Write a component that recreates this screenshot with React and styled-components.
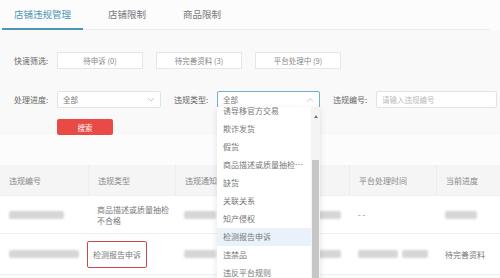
import React from 'react';
import styled, { createGlobalStyle } from 'styled-components';

const GlobalStyle = createGlobalStyle`
  html, body {
    margin: 0;
    padding: 0;
    width: 500px;
    height: 278px;
    overflow: hidden;
    background: #fcfcfc;
    font-family: "Noto Sans CJK SC", "Noto Sans", sans-serif;
    color: #666;
  }
`;

const Page = styled.div`
  width: 500px;
  height: 278px;
  overflow: hidden;
`;

// Tabs
const Tabs = styled.div`
  display: flex;
  gap: 13px;
  height: 29px;
  margin: 0 10px 0 2px;
  border-bottom: 1px solid #ececec;
`;

const Tab = styled.div`
  padding: 0 12px;
  font-size: 9.5px;
  line-height: 29px;
  color: ${(p) => (p.$active ? '#4d97b5' : '#777')};
  border-bottom: 2px solid ${(p) => (p.$active ? '#4d97b5' : 'transparent')};
  margin-bottom: -1px;
`;

// Filters
const Filters = styled.div`
  padding: 22px 0 0 14px;
  background: #f9f9f9;
`;

const Row = styled.div`
  display: flex;
  align-items: center;
  height: 17px;
  margin-bottom: ${(p) => p.$mb || 0}px;
`;

const Label = styled.div`
  width: 43px;
  flex: none;
  font-size: 8px;
  color: #666;
`;

const QuickBtn = styled.div`
  width: 86px;
  height: 17px;
  margin-right: 13px;
  box-sizing: border-box;
  border: 1px solid #e6e6e6;
  background: #fff;
  font-size: 7.5px;
  color: #888;
  display: flex;
  align-items: center;
  justify-content: center;
`;

const FieldWrap = styled.div`
  position: relative;
  width: ${(p) => p.$w}px;
  margin-right: 13px;
  flex: none;
`;

const Field = styled.div`
  height: 17px;
  box-sizing: border-box;
  border: 1px solid ${(p) => (p.$focus ? '#6fb0cc' : '#e3e3e3')};
  border-radius: 2px;
  background: #fff;
  display: flex;
  align-items: center;
  justify-content: space-between;
  padding: 0 5px;
  font-size: 7.5px;
  color: ${(p) => (p.$placeholder ? '#bbb' : '#777')};
`;

const SearchBtn = styled.div`
  margin-left: 43px;
  width: 56px;
  height: 16px;
  border-radius: 2px;
  background: #ea4a45;
  color: #fff;
  font-size: 7.5px;
  display: flex;
  align-items: center;
  justify-content: center;
`;

// Dropdown
const Menu = styled.div`
  position: absolute;
  top: 16px;
  left: 0;
  width: 103px;
  height: 180px;
  background: #fff;
  box-shadow: 0 2px 6px rgba(0, 0, 0, 0.12);
  display: flex;
  overflow: hidden;
  z-index: 5;
`;

const MenuList = styled.div`
  flex: 1;
  min-width: 0;
  margin-top: -5px;
`;

const MenuItem = styled.div`
  height: 18px;
  line-height: 18px;
  padding: 0 4px 0 6px;
  font-size: 8px;
  color: #777;
  white-space: nowrap;
  overflow: hidden;
  text-overflow: ellipsis;
  background: ${(p) => (p.$hover ? '#e9f2fb' : 'transparent')};
`;

const ScrollTrack = styled.div`
  width: 9px;
  flex: none;
  background: #f4f4f4;
  display: flex;
  flex-direction: column;
  align-items: center;
`;

const ScrollArrow = styled.div`
  margin-top: 8px;
  width: 0;
  height: 0;
  border-left: 2.5px solid transparent;
  border-right: 2.5px solid transparent;
  border-bottom: 3px solid #777;
`;

const ScrollThumb = styled.div`
  margin-top: 42px;
  width: 7px;
  flex: 1;
  background: #c6c6c6;
`;

// Table
const Table = styled.div`
  padding-top: 30px;
  background: #fcfcfc;
`;

const TRow = styled.div`
  display: grid;
  grid-template-columns: 88px 87px 87px 87px 87px 1fr;
  height: ${(p) => p.$h}px;
  background: ${(p) => (p.$head ? '#f5f5f5' : '#fff')};
  border-bottom: 1px solid #f0f0f0;
`;

const Cell = styled.div`
  display: flex;
  align-items: center;
  padding-left: 9px;
  font-size: 8px;
  line-height: 11px;
  color: ${(p) => (p.$head ? '#888' : '#777')};
  border-left: ${(p) => (p.$divider ? '1px solid #ececec' : 'none')};
`;

const Blur = styled.span`
  display: inline-block;
  width: ${(p) => p.$w}px;
  height: 8px;
  background: #d6d6d6;
  border-radius: 2px;
  filter: blur(1.2px);
`;

const Marked = styled.span`
  margin-left: -10px;
  padding: 7px 5px;
  border: 1.5px solid #c94848;
  border-radius: 2px;
`;

const Chevron = ({ up }) => (
  <svg width="8" height="5" viewBox="0 0 8 5">
    <path
      d={up ? 'M1 4.5 L4 1.5 L7 4.5' : 'M1 1 L4 4 L7 1'}
      fill="none"
      stroke="#bbb"
      strokeWidth="0.8"
    />
  </svg>
);

const items = [
  '诱导移官方交易',
  '欺诈发货',
  '假货',
  '商品描述或质量抽检不合格',
  '缺货',
  '关联关系',
  '知产侵权',
  '检测报告申诉',
  '违禁品',
  '违反平台规则',
];

const App = () => (
  <Page>
    <GlobalStyle />
    <Tabs>
      <Tab $active>店铺违规管理</Tab>
      <Tab>店铺限制</Tab>
      <Tab>商品限制</Tab>
    </Tabs>
    <Filters>
      <Row $mb={22}>
        <Label>快速筛选:</Label>
        <QuickBtn>待申诉 (0)</QuickBtn>
        <QuickBtn>待完善资料 (3)</QuickBtn>
        <QuickBtn>平台处理中 (9)</QuickBtn>
      </Row>
      <Row $mb={11}>
        <Label>处理进度:</Label>
        <FieldWrap $w={104}>
          <Field>
            全部
            <Chevron />
          </Field>
        </FieldWrap>
        <Label>违规类型:</Label>
        <FieldWrap $w={103}>
          <Field $focus>
            全部
            <Chevron up />
          </Field>
          <Menu>
            <MenuList>
              {items.map((t) => (
                <MenuItem key={t} $hover={t === '检测报告申诉'}>
                  {t}
                </MenuItem>
              ))}
            </MenuList>
            <ScrollTrack>
              <ScrollArrow />
              <ScrollThumb />
            </ScrollTrack>
          </Menu>
        </FieldWrap>
        <Label>违规编号:</Label>
        <FieldWrap $w={121}>
          <Field $placeholder>请输入违规编号</Field>
        </FieldWrap>
      </Row>
      <SearchBtn>搜索</SearchBtn>
    </Filters>
    <Table>
      <TRow $head $h={30}>
        <Cell $head>违规编号</Cell>
        <Cell $head $divider>违规类型</Cell>
        <Cell $head $divider>违规通知时间</Cell>
        <Cell $head $divider>违规原因</Cell>
        <Cell $head $divider>平台处理时间</Cell>
        <Cell $head $divider>当前进度</Cell>
      </TRow>
      <TRow $h={37}>
        <Cell><Blur $w={55} /></Cell>
        <Cell>商品描述或质量抽检<br />不合格</Cell>
        <Cell><Blur $w={32} /></Cell>
        <Cell><Blur $w={70} /></Cell>
        <Cell>- -</Cell>
        <Cell><Blur $w={32} /></Cell>
      </TRow>
      <TRow $h={40}>
        <Cell><Blur $w={70} /></Cell>
        <Cell><Marked>检测报告申诉</Marked></Cell>
        <Cell><Blur $w={32} /></Cell>
        <Cell><Blur $w={70} /></Cell>
        <Cell><Blur $w={40} />&nbsp;&nbsp;<Blur $w={26} /></Cell>
        <Cell>待完善资料</Cell>
      </TRow>
    </Table>
  </Page>
);

export default App;
